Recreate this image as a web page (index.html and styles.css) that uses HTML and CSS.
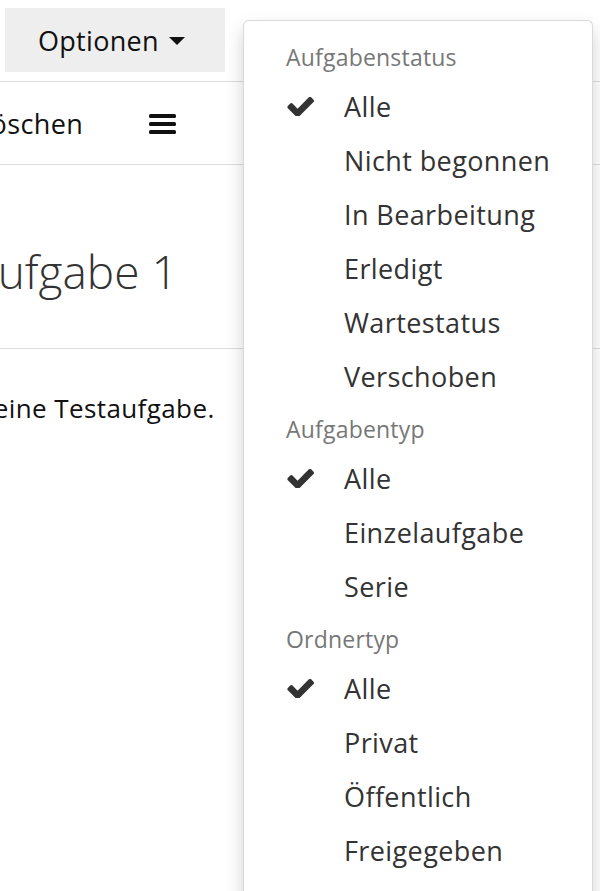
FILE: index.html
```html
<!DOCTYPE html>
<html lang="de">
<head>
<meta charset="utf-8">
<title>Aufgabe</title>
<link rel="stylesheet" href="styles.css">
</head>
<body>
<div class="page">
  <div class="toolbar">
    <button class="opt-btn">Optionen <span class="caret"></span></button>
  </div>
  <div class="actions">
    <span class="action-text">Löschen</span>
    <svg class="bars" viewBox="0 0 27 20" width="27" height="20" aria-hidden="true">
      <rect x="0" y="0" width="27" height="4" rx="1.5" fill="#111"/>
      <rect x="0" y="8" width="27" height="4" rx="1.5" fill="#111"/>
      <rect x="0" y="16" width="27" height="4" rx="1.5" fill="#111"/>
    </svg>
  </div>
  <div class="title-row">
    <h1 class="title">Aufgabe 1</h1>
  </div>
  <p class="desc">Dies ist eine Testaufgabe.</p>
</div>

<div class="menu">
  <div class="menu-header">Aufgabenstatus</div>
  <div class="menu-item checked"><svg class="check" viewBox="100 360 1571 1066" width="27" height="19"><path d="M1671 566q0 40-28 68l-724 724-136 136q-28 28-68 28t-68-28l-136-136-362-362q-28-28-28-68t28-68l136-136q28-28 68-28t68 28l294 295 656-657q28-28 68-28t68 28l136 136q28 28 28 68z"/></svg><span>Alle</span></div>
  <div class="menu-item"><span>Nicht begonnen</span></div>
  <div class="menu-item"><span>In Bearbeitung</span></div>
  <div class="menu-item"><span>Erledigt</span></div>
  <div class="menu-item"><span>Wartestatus</span></div>
  <div class="menu-item"><span>Verschoben</span></div>
  <div class="menu-header">Aufgabentyp</div>
  <div class="menu-item checked"><svg class="check" viewBox="100 360 1571 1066" width="27" height="19"><path d="M1671 566q0 40-28 68l-724 724-136 136q-28 28-68 28t-68-28l-136-136-362-362q-28-28-28-68t28-68l136-136q28-28 68-28t68 28l294 295 656-657q28-28 68-28t68 28l136 136q28 28 28 68z"/></svg><span>Alle</span></div>
  <div class="menu-item"><span>Einzelaufgabe</span></div>
  <div class="menu-item"><span>Serie</span></div>
  <div class="menu-header">Ordnertyp</div>
  <div class="menu-item checked"><svg class="check" viewBox="100 360 1571 1066" width="27" height="19"><path d="M1671 566q0 40-28 68l-724 724-136 136q-28 28-68 28t-68-28l-136-136-362-362q-28-28-28-68t28-68l136-136q28-28 68-28t68 28l294 295 656-657q28-28 68-28t68 28l136 136q28 28 28 68z"/></svg><span>Alle</span></div>
  <div class="menu-item"><span>Privat</span></div>
  <div class="menu-item"><span>Öffentlich</span></div>
  <div class="menu-item"><span>Freigegeben</span></div>
</div>
</body>
</html>
```

FILE: styles.css
```css
html, body {
  margin: 0;
  padding: 0;
  background: #fff;
  overflow: hidden;
  height: 891px;
}
body {
  font-family: "Open Sans", "Noto Sans", sans-serif;
  color: #222;
  position: relative;
}
.page {
  width: 600px;
}
.toolbar {
  height: 82px;
  padding: 8px 0 0 5px;
  box-sizing: border-box;
  border-bottom: 1px solid #ddd;
}
.opt-btn {
  width: 220px;
  height: 64px;
  background: #eeeeee;
  border: none;
  margin: 0;
  padding: 0 0 0 33px;
  text-align: left;
  font-family: inherit;
  font-size: 27px;
  letter-spacing: 0.3px;
  color: #111;
  display: flex;
  align-items: center;
  gap: 10px;
}
.caret {
  display: inline-block;
  width: 0;
  height: 0;
  border-left: 8.5px solid transparent;
  border-right: 8.5px solid transparent;
  border-top: 8px solid #111;
  margin-top: 2px;
}
.actions {
  height: 83px;
  box-sizing: border-box;
  border-bottom: 1px solid #ddd;
  display: flex;
  align-items: center;
  margin-left: -24px;
  gap: 66px;
  font-size: 27px;
  letter-spacing: 0.4px;
  color: #111;
}
.bars {
  display: block;
  margin-top: 2px;
}
.title-row {
  height: 184px;
  box-sizing: border-box;
  border-bottom: 1px solid #ddd;
  display: flex;
  align-items: center;
  margin-left: -30px;
}
.title {
  margin: 0;
  font-weight: 300;
  font-size: 46px;
  color: #333;
  padding-top: 28px;
}
.desc {
  margin: 41px 0 0 -104px;
  font-size: 26px;
  letter-spacing: 0.4px;
  color: #111;
}
.menu {
  position: absolute;
  left: 243px;
  top: 20px;
  width: 350px;
  height: 900px;
  box-sizing: border-box;
  background: #fff;
  border: 1px solid rgba(0,0,0,0.15);
  border-radius: 6px;
  box-shadow: 0 9px 18px rgba(0,0,0,0.175);
  padding-top: 12px;
}
.menu-header {
  height: 48px;
  display: flex;
  align-items: center;
  padding-left: 42px;
  font-size: 23px;
  letter-spacing: 0.2px;
  color: #777;
}
.menu-item {
  height: 54px;
  box-sizing: border-box;
  padding-bottom: 3px;
  display: flex;
  align-items: center;
  position: relative;
  padding-left: 100px;
  font-size: 27px;
  letter-spacing: 0.4px;
  color: #333;
}
.check {
  position: absolute;
  left: 43px;
  top: 16px;
  fill: #333;
}
```
